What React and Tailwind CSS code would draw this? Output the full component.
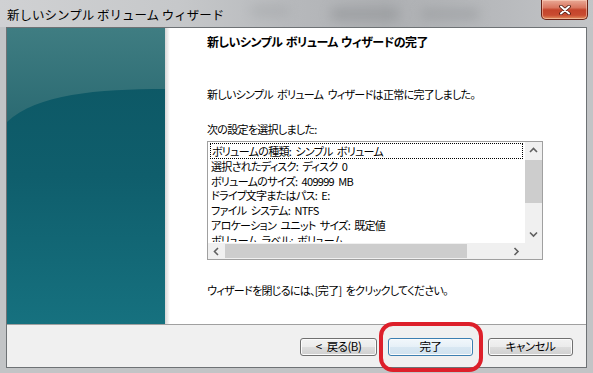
import React from 'react';

const items = [
  'ボリュームの種類: シンプル ボリューム',
  '選択されたディスク: ディスク 0',
  'ボリュームのサイズ: 409999 MB',
  'ドライブ文字またはパス: E:',
  'ファイル システム: NTFS',
  'アロケーション ユニット サイズ: 既定値',
  'ボリューム ラベル: ボリューム',
];

function Chevron({ dir }) {
  const paths = {
    up: 'M1 5 L4.5 1.5 L8 5',
    down: 'M1 1.5 L4.5 5 L8 1.5',
    left: 'M5 1 L1.5 4.5 L5 8',
    right: 'M1.5 1 L5 4.5 L1.5 8',
  };
  const vertical = dir === 'up' || dir === 'down';
  return (
    <svg width={vertical ? 9 : 7} height={vertical ? 7 : 9} viewBox={vertical ? '0 0 9 7' : '0 0 7 9'}>
      <path d={paths[dir]} fill="none" stroke="#606060" strokeWidth="1.6" />
    </svg>
  );
}

function WinButton({ children, primary, width }) {
  return (
    <button
      className={
        'h-[18px] rounded-[3px] border text-[11.5px] leading-none tracking-[-0.5px] [word-spacing:3px] text-black flex items-center justify-center shadow-[inset_0_0_0_1px_#fbfbfb] ' +
        width +
        (primary
          ? ' border-[#3c7fb1] bg-[linear-gradient(#f1f7fb_0%,#e6f0f7_50%,#d8e7f2_50%,#d0e2ef_100%)]'
          : ' border-[#707070] bg-[linear-gradient(#f2f2f2_0%,#ebebeb_50%,#dddddd_50%,#cfcfcf_100%)]')
      }
    >
      {children}
    </button>
  );
}

export default function App() {
  return (
    <div className="w-[593px] h-[373px] relative overflow-hidden bg-[#c2c4c6] text-black font-['Noto_Sans_CJK_JP','Noto_Sans',sans-serif]">
      {/* Title bar */}
      <div className="h-[27px] relative flex items-center pl-[7px] overflow-hidden bg-[linear-gradient(to_right,#d0d1d3_0%,#c6c8ca_30%,#b6b8bb_50%,#aeb0b3_65%,#b8babd_85%,#c3c5c7_100%)]">
        <div className="absolute left-[330px] top-[8px] w-[70px] h-[12px] rounded-full bg-[#8e9194] blur-[6px] opacity-60" />
        <div className="absolute left-[420px] top-[9px] w-[60px] h-[10px] rounded-full bg-[#8e9194] blur-[6px] opacity-50" />
        <div className="absolute left-[250px] top-[6px] w-[40px] h-[10px] rounded-full bg-[#9a9da0] blur-[6px] opacity-40" />
        <span className="relative text-[12.5px] leading-none pt-[3px]">新しいシンプル ボリューム ウィザード</span>
        <div className="absolute right-[5px] top-0 w-[47px] h-[20px] rounded-b-[5px] border border-t-0 border-[#6b2316] bg-[linear-gradient(#e9a996_0%,#d9765f_40%,#c4442b_52%,#c94c31_80%,#e2915f_100%)] flex items-center justify-center shadow-[inset_0_0_0_1px_rgba(255,220,200,0.5)]">
          <svg width="12" height="10" viewBox="0 0 12 10">
            <path d="M2 1.5 L10 8.5 M10 1.5 L2 8.5" stroke="#4a1a10" strokeWidth="3.6" strokeLinecap="round" />
            <path d="M2 1.5 L10 8.5 M10 1.5 L2 8.5" stroke="#ffffff" strokeWidth="2" strokeLinecap="round" />
          </svg>
        </div>
      </div>

      {/* Window body */}
      <div className="mx-[6px] border border-[#6e7275] bg-white">
        <div className="h-[296px] flex">
          <div className="w-[158px]">
            <svg width="158" height="296" viewBox="0 0 158 296" className="block">
              <defs>
                <linearGradient id="lower" x1="0" y1="0" x2="0" y2="1">
                  <stop offset="0" stopColor="#0c5562" />
                  <stop offset="0.5" stopColor="#0f5e6c" />
                  <stop offset="1" stopColor="#16717f" />
                </linearGradient>
                <linearGradient id="upper" x1="0" y1="0" x2="0" y2="1">
                  <stop offset="0" stopColor="#3f7d82" />
                  <stop offset="1" stopColor="#2b6a72" />
                </linearGradient>
              </defs>
              <rect width="158" height="296" fill="url(#lower)" />
              <path d="M0 0 H158 V61 C90 61 30 66 0 94 Z" fill="url(#upper)" />
            </svg>
          </div>
          <div className="w-[5px] bg-[linear-gradient(to_right,#d6d6d6,#ffffff)]" />
          <div className="flex-1 pl-[37px] pt-[6px] text-[11px] leading-[16px] tracking-[-0.7px] [word-spacing:2.5px] [font-feature-settings:'palt']">
            <div className="font-bold text-[12px] tracking-[-0.5px] [word-spacing:1px]">新しいシンプル ボリューム ウィザードの完了</div>
            <div className="mt-[36px]">新しいシンプル ボリューム ウィザードは正常に完了しました。</div>
            <div className="mt-[19px]">次の設定を選択しました:</div>

            {/* List box */}
            <div className="mt-[4px] w-[336px] h-[119px] border border-[#a0a0a0] flex flex-col">
              <div className="flex-1 flex min-h-0">
                <div className="flex-1">
                  <div className="h-[100px] overflow-hidden pt-[1px]">
                    {items.map((t, i) => (
                      <div
                        key={t}
                        className={
                          'mx-[2px] pl-[1px] whitespace-nowrap ' +
                          (i === 0
                            ? 'h-[15.8px] leading-[14px] border border-dotted border-black'
                            : 'h-[14.8px] leading-[14.8px]')
                        }
                      >
                        {t}
                      </div>
                    ))}
                  </div>
                </div>
                <div className="w-[17px] bg-[#f0f0f0] flex flex-col">
                  <div className="h-[17px] flex items-center justify-center"><Chevron dir="up" /></div>
                  <div className="mt-[1px] h-[43px] bg-[#cdcdcd]" />
                  <div className="flex-1" />
                  <div className="h-[17px] flex items-center justify-center"><Chevron dir="down" /></div>
                </div>
              </div>
              <div className="h-[16px] flex bg-[#f0f0f0]">
                <div className="w-[17px] flex items-center justify-center"><Chevron dir="left" /></div>
                <div className="w-[242px] my-[1px] bg-[#cdcdcd]" />
                <div className="flex-1" />
                <div className="w-[17px] flex items-center justify-center"><Chevron dir="right" /></div>
                <div className="w-[17px]" />
              </div>
            </div>

            <div className="mt-[22px]">ウィザードを閉じるには、[完了] をクリックしてください。</div>
          </div>
        </div>
        <div className="h-[1px] bg-[#a0a0a0]" />
        <div className="h-[42px] bg-[#f0f0f0] flex justify-end items-start pt-[13px] pr-[13px] [font-feature-settings:'palt']">
          <WinButton width="w-[77px]">&lt; 戻る(B)</WinButton>
          <div className="w-[11px]" />
          <WinButton primary width="w-[85px]">完了</WinButton>
          <div className="w-[15px]" />
          <WinButton width="w-[85px]">キャンセル</WinButton>
        </div>
      </div>

      {/* red highlight annotation */}
      <div className="absolute left-[379px] top-[322px] w-[104px] h-[50px] border-[4px] border-[#dd1f2a] rounded-[14px]" />
    </div>
  );
}
